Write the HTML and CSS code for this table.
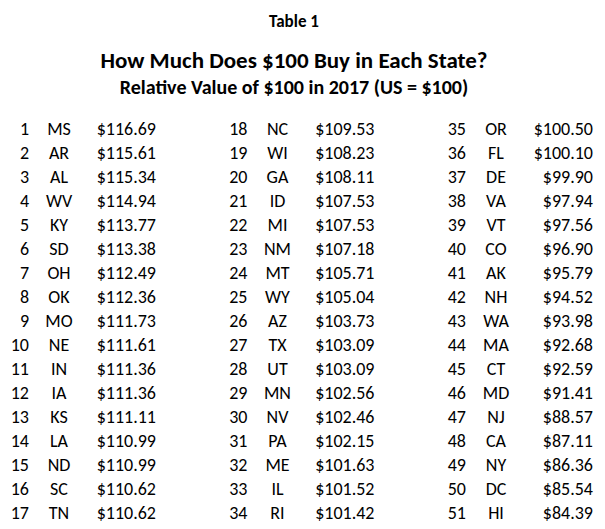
FILE: index.html
```html
<!DOCTYPE html>
<html lang="en">
<head>
<meta charset="utf-8">
<title>Table 1</title>
<link rel="stylesheet" href="styles.css">
</head>
<body>
<div class="page">
  <header class="head">
    <div class="label">Table 1</div>
    <h1 class="title">How Much Does $100 Buy in Each State?</h1>
    <h2 class="subtitle">Relative Value of $100 in 2017 (US = $100)</h2>
  </header>
  <div class="groups">
    <div class="group">
      <span class="rank">1</span><span class="st">MS</span><span class="val">$116.69</span>
      <span class="rank">2</span><span class="st">AR</span><span class="val">$115.61</span>
      <span class="rank">3</span><span class="st">AL</span><span class="val">$115.34</span>
      <span class="rank">4</span><span class="st">WV</span><span class="val">$114.94</span>
      <span class="rank">5</span><span class="st">KY</span><span class="val">$113.77</span>
      <span class="rank">6</span><span class="st">SD</span><span class="val">$113.38</span>
      <span class="rank">7</span><span class="st">OH</span><span class="val">$112.49</span>
      <span class="rank">8</span><span class="st">OK</span><span class="val">$112.36</span>
      <span class="rank">9</span><span class="st">MO</span><span class="val">$111.73</span>
      <span class="rank">10</span><span class="st">NE</span><span class="val">$111.61</span>
      <span class="rank">11</span><span class="st">IN</span><span class="val">$111.36</span>
      <span class="rank">12</span><span class="st">IA</span><span class="val">$111.36</span>
      <span class="rank">13</span><span class="st">KS</span><span class="val">$111.11</span>
      <span class="rank">14</span><span class="st">LA</span><span class="val">$110.99</span>
      <span class="rank">15</span><span class="st">ND</span><span class="val">$110.99</span>
      <span class="rank">16</span><span class="st">SC</span><span class="val">$110.62</span>
      <span class="rank">17</span><span class="st">TN</span><span class="val">$110.62</span>
    </div>
    <div class="group">
      <span class="rank">18</span><span class="st">NC</span><span class="val">$109.53</span>
      <span class="rank">19</span><span class="st">WI</span><span class="val">$108.23</span>
      <span class="rank">20</span><span class="st">GA</span><span class="val">$108.11</span>
      <span class="rank">21</span><span class="st">ID</span><span class="val">$107.53</span>
      <span class="rank">22</span><span class="st">MI</span><span class="val">$107.53</span>
      <span class="rank">23</span><span class="st">NM</span><span class="val">$107.18</span>
      <span class="rank">24</span><span class="st">MT</span><span class="val">$105.71</span>
      <span class="rank">25</span><span class="st">WY</span><span class="val">$105.04</span>
      <span class="rank">26</span><span class="st">AZ</span><span class="val">$103.73</span>
      <span class="rank">27</span><span class="st">TX</span><span class="val">$103.09</span>
      <span class="rank">28</span><span class="st">UT</span><span class="val">$103.09</span>
      <span class="rank">29</span><span class="st">MN</span><span class="val">$102.56</span>
      <span class="rank">30</span><span class="st">NV</span><span class="val">$102.46</span>
      <span class="rank">31</span><span class="st">PA</span><span class="val">$102.15</span>
      <span class="rank">32</span><span class="st">ME</span><span class="val">$101.63</span>
      <span class="rank">33</span><span class="st">IL</span><span class="val">$101.52</span>
      <span class="rank">34</span><span class="st">RI</span><span class="val">$101.42</span>
    </div>
    <div class="group">
      <span class="rank">35</span><span class="st">OR</span><span class="val">$100.50</span>
      <span class="rank">36</span><span class="st">FL</span><span class="val">$100.10</span>
      <span class="rank">37</span><span class="st">DE</span><span class="val">$99.90</span>
      <span class="rank">38</span><span class="st">VA</span><span class="val">$97.94</span>
      <span class="rank">39</span><span class="st">VT</span><span class="val">$97.56</span>
      <span class="rank">40</span><span class="st">CO</span><span class="val">$96.90</span>
      <span class="rank">41</span><span class="st">AK</span><span class="val">$95.79</span>
      <span class="rank">42</span><span class="st">NH</span><span class="val">$94.52</span>
      <span class="rank">43</span><span class="st">WA</span><span class="val">$93.98</span>
      <span class="rank">44</span><span class="st">MA</span><span class="val">$92.68</span>
      <span class="rank">45</span><span class="st">CT</span><span class="val">$92.59</span>
      <span class="rank">46</span><span class="st">MD</span><span class="val">$91.41</span>
      <span class="rank">47</span><span class="st">NJ</span><span class="val">$88.57</span>
      <span class="rank">48</span><span class="st">CA</span><span class="val">$87.11</span>
      <span class="rank">49</span><span class="st">NY</span><span class="val">$86.36</span>
      <span class="rank">50</span><span class="st">DC</span><span class="val">$85.54</span>
      <span class="rank">51</span><span class="st">HI</span><span class="val">$84.39</span>
    </div>
  </div>
</div>
</body>
</html>
```

FILE: styles.css
```css
html, body {
  margin: 0;
  padding: 0;
  background: #ffffff;
}

body {
  font-family: Carlito, Calibri, Lato, "Liberation Sans", sans-serif;
  color: #000000;
}

.page {
  width: 605px;
  height: 529px;
  padding-top: 11.5px;
  box-sizing: border-box;
  overflow: hidden;
}

.head {
  width: 588px;
  text-align: center;
}

.label {
  font-size: 17px;
  line-height: 20px;
  font-weight: 700;
}

.title {
  margin: 14.65px 0 0;
  font-size: 23px;
  line-height: 28px;
  font-weight: 700;
}

.subtitle {
  margin: 1.05px 0 0;
  font-size: 20px;
  line-height: 24px;
  font-weight: 700;
}

.groups {
  display: flex;
  gap: 62.5px;
  margin-top: 17.65px;
}

.group {
  display: grid;
  grid-template-columns: 29px 60px 67px;
  grid-auto-rows: 24px;
  font-size: 18px;
  line-height: 24px;
}

.rank {
  text-align: right;
}

.st {
  text-align: center;
}

.val {
  text-align: right;
}
```
